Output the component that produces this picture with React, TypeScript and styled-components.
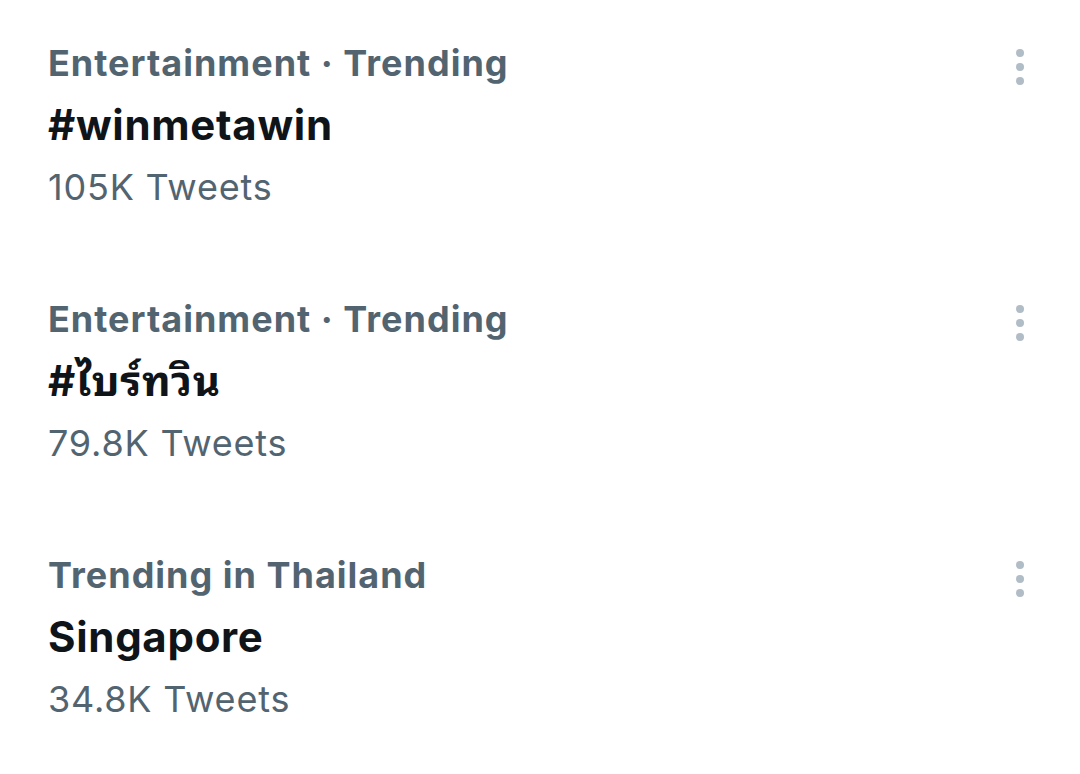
import React from "react";
import styled, { createGlobalStyle } from "styled-components";

const Global = createGlobalStyle`
  html, body { margin: 0; padding: 0; background: #ffffff; }
  body { font-family: Inter, "Noto Sans Thai Looped", Loma, Garuda, "Noto Serif Thai", "Noto Sans", sans-serif; }
`;

const List = styled.div`
  display: flex;
  flex-direction: column;
  padding: 32px 0 0 48px;
  width: 1080px;
  box-sizing: border-box;
`;

const Item = styled.div`
  display: flex;
  justify-content: space-between;
  align-items: flex-start;
  height: 256px;
  padding-right: 56px;
`;

const Texts = styled.div`
  display: flex;
  flex-direction: column;
`;

const Meta = styled.div`
  font-size: 36px;
  line-height: 62px;
  font-weight: 700;
  letter-spacing: 1px;
  color: #536471;
  white-space: nowrap;
`;

const Title = styled.div`
  font-size: 42px;
  line-height: 62px;
  font-weight: 700;
  letter-spacing: 0.7px;
  color: #0f1419;
  white-space: nowrap;
`;

const Count = styled.div`
  font-size: 36px;
  line-height: 62px;
  font-weight: 400;
  letter-spacing: 0.8px;
  color: #536471;
  white-space: nowrap;
`;

const More = styled.div`
  display: flex;
  flex-direction: column;
  align-items: center;
  gap: 6px;
  margin-top: 17px;
`;

const Dot = styled.span`
  width: 8px;
  height: 8px;
  border-radius: 50%;
  background: #b0bcc6;
`;

const trends = [
  { meta: "Entertainment · Trending", title: "#winmetawin", count: "105K Tweets" },
  { meta: "Entertainment · Trending", title: "#ไบร์ทวิน", count: "79.8K Tweets" },
  { meta: "Trending in Thailand", title: "Singapore", count: "34.8K Tweets" },
];

export default function App() {
  return (
    <>
      <Global />
      <List>
        {trends.map((t) => (
          <Item key={t.title}>
            <Texts>
              <Meta>{t.meta}</Meta>
              <Title>{t.title}</Title>
              <Count>{t.count}</Count>
            </Texts>
            <More>
              <Dot />
              <Dot />
              <Dot />
            </More>
          </Item>
        ))}
      </List>
    </>
  );
}
